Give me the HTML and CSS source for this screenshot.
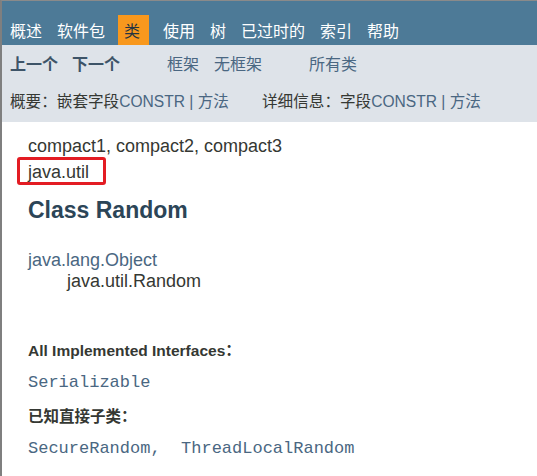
FILE: index.html
```html
<!DOCTYPE html>
<html lang="zh">
<head>
<meta charset="utf-8">
<title>Random</title>
<link rel="stylesheet" href="styles.css">
</head>
<body>
<div class="page">
  <div class="topnav">
    <ul class="navlist">
      <li>概述</li>
      <li>软件包</li>
      <li class="active">类</li>
      <li>使用</li>
      <li>树</li>
      <li>已过时的</li>
      <li>索引</li>
      <li>帮助</li>
    </ul>
  </div>
  <div class="subnav">
    <div class="row row1">
      <span class="dis">上一个</span>
      <span class="dis next">下一个</span>
      <a class="lnk frames">框架</a>
      <a class="lnk noframes">无框架</a>
      <a class="lnk allc">所有类</a>
    </div>
    <div class="row row2">
      <div class="grp summary">概要：嵌套字段<span class="lnk">CONSTR&nbsp;|&nbsp;方法</span></div>
      <div class="grp">详细信息：字段<span class="lnk">CONSTR&nbsp;|&nbsp;方法</span></div>
    </div>
  </div>
  <div class="content">
    <div class="line">compact1, compact2, compact3</div>
    <div class="line pkg"><span class="pkgname">java.util</span></div>
    <h2 class="title">Class Random</h2>
    <div class="inherit">
      <div class="line lnk">java.lang.Object</div>
      <div class="line sub">java.util.Random</div>
    </div>
    <div class="dt first">All Implemented Interfaces：</div>
    <div class="dd code">Serializable</div>
    <div class="dt">已知直接子类：</div>
    <div class="dd code last">SecureRandom,&nbsp; ThreadLocalRandom</div>
  </div>
</div>
</body>
</html>
```
FILE: styles.css
```css
*, *::before, *::after { box-sizing: border-box; }
html, body { margin: 0; padding: 0; background: #ffffff; }
body {
  font-family: "Liberation Sans", "Noto Sans CJK SC", Arial, sans-serif;
  color: #353833;
}
.page {
  border-top: 1px solid #8a8a8a;
  border-left: 2px solid #7f7f7f;
  min-height: 476px;
}
.topnav {
  background: #4d7a97;
  height: 44px;
  padding-top: 14px;
}
.navlist {
  list-style: none;
  margin: 0;
  padding: 0 0 0 2px;
  display: flex;
}
.navlist li {
  font-size: 16px;
  line-height: 27px;
  height: 30px;
  padding: 3px 9px 0 6px;
  color: #ffffff;
}
.navlist li.active {
  background: #f8981d;
  color: #253441;
  margin: 0 8px 0 4px;
}
.subnav {
  background: #dee3e9;
  height: 77px;
  padding: 8px 0 0 8px;
}
.row { display: flex; white-space: nowrap; }
.row1 { font-size: 16px; line-height: 24px; }
.row2 { font-size: 15.6px; line-height: 24px; margin-top: 13px; }
.dis { font-weight: bold; color: #3d5468; }
.next { margin-left: 14px; }
.lnk { color: #4a6782; }
.frames { margin-left: 47px; }
.noframes { margin-left: 15px; }
.allc { margin-left: 47px; }
.summary { width: 252px; }
.content { padding: 14px 0 0 26px; }
.line { font-size: 18px; line-height: 20.5px; }
.pkg { position: relative; margin-top: 5px; }
.pkgname { position: relative; display: inline-block; vertical-align: top; }
.pkgname::after {
  content: "";
  position: absolute;
  left: -11px;
  top: -4.5px;
  width: 89px;
  height: 28px;
  border: 3px solid #e31c23;
  border-radius: 3px;
}
.title {
  font-size: 23px;
  font-weight: bold;
  color: #2c4557;
  line-height: 27px;
  margin: 14.5px 0 0;
}
.inherit { margin-top: 26.7px; }
.inherit .sub { padding-left: 39px; }
.dt {
  font-size: 15.5px;
  font-weight: bold;
  line-height: 18px;
  margin-top: 14.8px;
}
.dt.first { margin-top: 51px; }
.dd { margin-top: 13px; }
.dd.last { margin-top: 13.2px; }
.code {
  font-family: "Liberation Mono", "Courier New", monospace;
  font-size: 17px;
  line-height: 20px;
  color: #4a6782;
  white-space: nowrap;
}
```
